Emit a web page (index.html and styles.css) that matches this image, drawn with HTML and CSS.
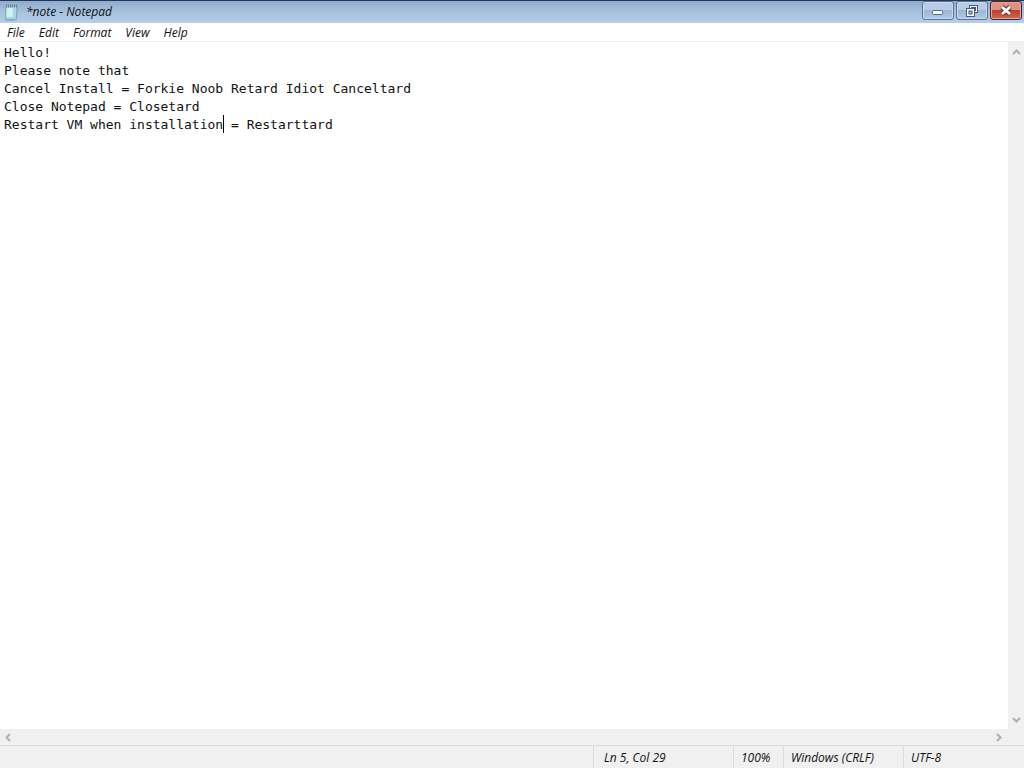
FILE: index.html
```html
<!doctype html>
<html lang="en">
  <head>
    <meta charset="utf-8">
    <title>*note - Notepad</title>
    <link rel="stylesheet" href="styles.css">
  </head>

  <body>
    <header class="titlebar">
      <svg class="app-icon" width="16" height="18" viewBox="0 0 16 18">
        <path d="M4 3.5h10.5l-.5 12L12 17.500H3z" fill="#6f97ab"/>
        <path d="M3 3h11l-.7 13.500H2.200z" fill="#a9d6e4" stroke="#86a9ba"/>
        <path d="M4 5h6l-.5 9H3.500z" fill="#d3eef4"/>
        <path d="M3.500 1.500v3M5.500 1.500v3M7.500 1.500v3M9.500 1.500v3M11.500 1.500v3M13.500 1.500v3" stroke="#6c7f91"/>
      </svg>
      <h1 class="title">*note - Notepad</h1>
      <div class="window-buttons">
        <button type="button" class="win-btn" aria-label="Minimize">
          <svg width="14" height="14" viewBox="0 0 14 14"><rect x="1.5" y="6.500" width="10" height="4" rx="1" fill="#f4f9ff" stroke="#59677f"/></svg>
        </button>
        <button type="button" class="win-btn" aria-label="Restore">
          <svg width="14" height="14" viewBox="0 0 14 14">
            <rect x="4.500" y="1.500" width="8" height="7" fill="#f4f9ff" stroke="#4c5a73"/>
            <rect x="6.500" y="3.500" width="4" height="3" fill="#a9c0dd" stroke="#4c5a73"/>
            <rect x="1.500" y="4.500" width="8" height="8" fill="#f4f9ff" stroke="#4c5a73"/>
            <rect x="4" y="7" width="3" height="3" fill="#a9c0dd" stroke="#4c5a73"/>
          </svg>
        </button>
        <button type="button" class="win-btn close" aria-label="Close">
          <svg width="14" height="14" viewBox="0 0 14 14">
            <path d="M3 3l8 7M11 3l-8 7" stroke="#71433f" stroke-width="5"/>
            <path d="M3 3l8 7M11 3l-8 7" stroke="#fff" stroke-width="2.500"/>
          </svg>
        </button>
      </div>
    </header>

    <nav class="menubar">
      <button type="button">File</button>
      <button type="button">Edit</button>
      <button type="button">Format</button>
      <button type="button">View</button>
      <button type="button">Help</button>
    </nav>

    <main class="editor">
      <div class="page">
        <textarea class="text" aria-label="Text editor" wrap="off" spellcheck="false">Hello!
Please note that
Cancel Install = Forkie Noob Retard Idiot Canceltard
Close Notepad = Closetard
Restart VM when installation = Restarttard</textarea>
        <span class="caret"></span>
      </div>
      <div class="scroll vertical">
        <button type="button" aria-label="Scroll up"><svg width="9" height="9" viewBox="0 0 9 9"><path d="M1 6l3.500-3.500L8 6"/></svg></button>
        <button type="button" aria-label="Scroll down"><svg width="9" height="9" viewBox="0 0 9 9"><path d="M1 3l3.500 3.500L8 3"/></svg></button>
      </div>
      <div class="scroll horizontal">
        <button type="button" aria-label="Scroll left"><svg width="9" height="9" viewBox="0 0 9 9"><path d="M6 1L2.500 4.500L6 8"/></svg></button>
        <button type="button" aria-label="Scroll right"><svg width="9" height="9" viewBox="0 0 9 9"><path d="M3 1l3.500 3.500L3 8"/></svg></button>
      </div>
    </main>

    <footer class="statusbar">
      <span class="cell spacer"></span>
      <span class="cell position">Ln 5, Col 29</span>
      <span class="cell zoom">100%</span>
      <span class="cell eol">Windows (CRLF)</span>
      <span class="cell encoding">UTF-8</span>
    </footer>
  </body>
</html>
```
FILE: styles.css
```css
* {
  box-sizing: border-box;
}
body {
  margin: 0;
  height: 100vh;
  display: flex;
  flex-direction: column;
  overflow: hidden;
  background: #fff;
  color: #111;
  font: italic 12px/16px "Open Sans", "Noto Sans", sans-serif;
}
button {
  margin: 0;
  padding: 0;
  border: 0;
  background: none;
  color: inherit;
  font: inherit;
}
svg {
  display: block;
  fill: none;
}

/* Title bar */
.titlebar {
  height: 23px;
  flex: none;
  display: flex;
  align-items: center;
  padding: 0 2px 0 3px;
  border-top: 1px solid #26384f;
  background: linear-gradient(#8fabcf, #a3bddb 40%, #b7cfe9);
}
.title {
  flex: 1;
  margin: 0 0 0 7px;
  font-size: 12px;
  font-weight: normal;
}
.window-buttons {
  display: flex;
  gap: 2px;
  align-self: flex-start;
}
.win-btn {
  width: 32px;
  height: 19px;
  display: flex;
  align-items: center;
  justify-content: center;
  border: 1px solid #5d7390;
  border-radius: 3px;
  box-shadow: inset 0 0 0 1px #c9daef;
  background: linear-gradient(#b7cce6 45%, #9bb5d5 50%, #b1cae6);
}
.win-btn.close {
  border-color: #4e2229;
  box-shadow: inset 0 0 0 1px #e5a79d;
  background: linear-gradient(#dc9285 45%, #bd3e2c 50%, #cf6a50);
}

/* Menu */
.menubar {
  height: 19px;
  flex: none;
  display: flex;
  border-bottom: 1px solid #f0f0f0;
}
.menubar button {
  padding: 1px 7px;
  line-height: 17px;
}

/* Text area with its two scrollbars */
.editor {
  flex: 1;
  min-height: 0;
  display: grid;
  grid-template: minmax(0, 1fr) 16px / minmax(0, 1fr) 16px;
  background: #f0f0f0;
}
.page {
  position: relative;
  background: #fff;
  font: 13px/18px "DejaVu Sans Mono", monospace;
}
.text {
  display: block;
  width: 100%;
  height: 100%;
  padding: 2px 4px;
  border: 0;
  outline: 0;
  resize: none;
  overflow: hidden;
  background: none;
  color: #111;
  font: inherit;
}
.caret {
  position: absolute;
  left: calc(4px + 28ch);
  top: 73px;
  width: 1px;
  height: 18px;
  background: #000;
}
.scroll {
  display: flex;
  justify-content: space-between;
}
.scroll button {
  width: 16px;
  height: 16px;
  display: flex;
  align-items: center;
  justify-content: center;
}
.scroll path {
  stroke: #b0b0b0;
  stroke-width: 2;
}
.vertical {
  flex-direction: column;
  padding: 2px 0;
}
.horizontal {
  padding-right: 2px;
}

/* Status bar */
.statusbar {
  height: 23px;
  flex: none;
  display: flex;
  border-top: 1px solid #dcdcdc;
  background: #f0f0f0;
}
.cell {
  padding: 4px 7px;
  border-left: 1px solid #dcdcdc;
  white-space: nowrap;
}
.spacer {
  flex: 1;
  border-left: 0;
}
.position {
  width: 140px;
  padding-left: 10px;
}
.zoom {
  width: 50px;
}
.eol {
  width: 120px;
}
.encoding {
  width: 121px;
}
```
